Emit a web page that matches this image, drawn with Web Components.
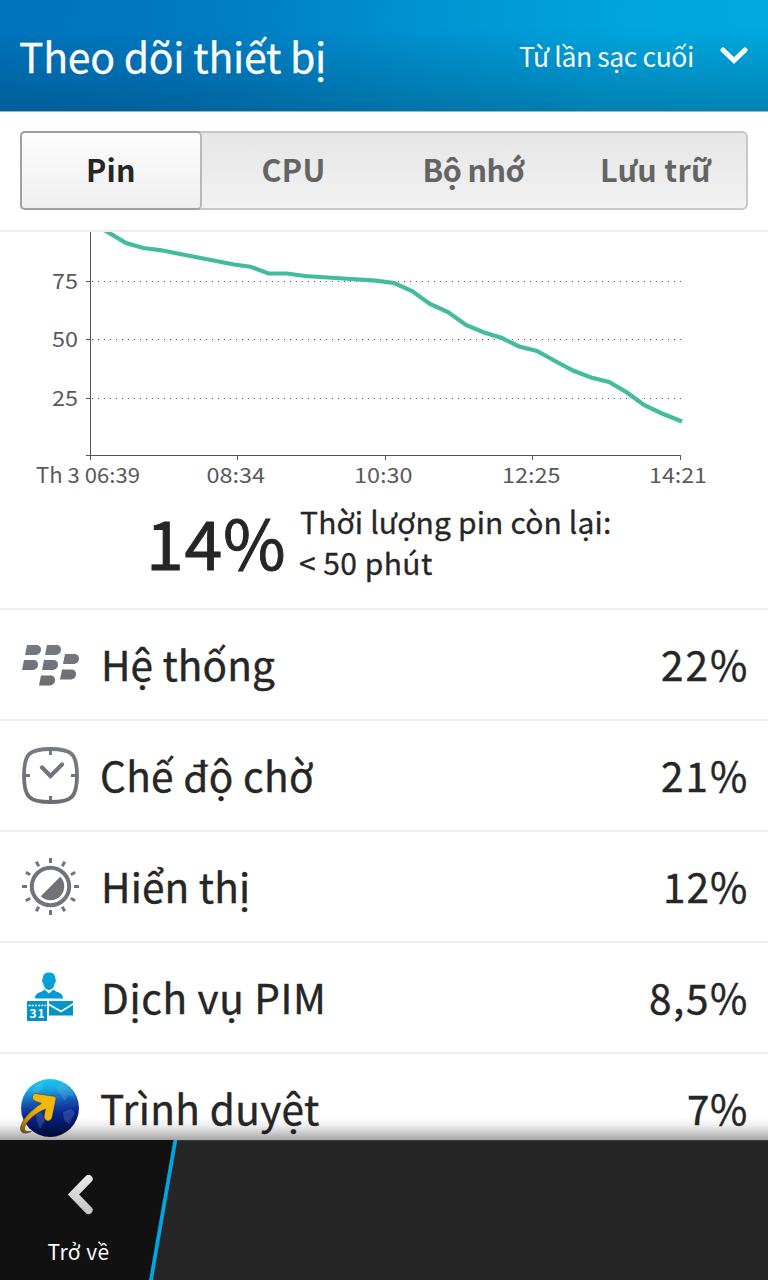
<!DOCTYPE html>
<html lang="vi">
<head>
<meta charset="utf-8">
<meta name="viewport" content="width=device-width, initial-scale=1">
<title>Theo dõi thiết bị</title>
<style>
  body {
    margin: 0;
    font-family: "Noto Sans CJK SC", "Noto Sans", sans-serif;
    color: #262626;
    background: #fff;
  }
</style>
</head>
<body>

<device-monitor></device-monitor>

<script>
// Text set to an exact ink width by adjusting the tracking
class FitText extends HTMLElement {

  constructor () {
    super()
    this.shadow = this.attachShadow({ mode: 'open' })
  }

  connectedCallback () {
    this.shadow.innerHTML =
    /*html*/`
    <style>
      :host {
        display: block;
        white-space: nowrap;
      }
    </style>
    <slot></slot>
    `
    this.fit()
  }

  fit () {
    const target = parseFloat(this.getAttribute('width'))
    const text = this.textContent
    const style = getComputedStyle(this)
    const context = document.createElement('canvas').getContext('2d')
    context.font = `${style.fontWeight} ${style.fontSize} ${style.fontFamily}`
    const ink = context.measureText(text)
    const width = ink.actualBoundingBoxLeft + ink.actualBoundingBoxRight

    this.style.width = `${target}px`
    this.style.textIndent = `${ink.actualBoundingBoxLeft}px`
    this.style.letterSpacing = `${(target - width) / (text.length - 1)}px`
  }
}

class TitleBar extends HTMLElement {

  constructor () {
    super()
    this.shadow = this.attachShadow({ mode: 'open' })
  }

  connectedCallback () {
    this.shadow.innerHTML =
    /*html*/`
    <style>
      :host {
        align-items: center;
        background:
          linear-gradient(to bottom, rgba(0, 40, 70, 0) 25%, rgba(0, 45, 75, 0.3) 100%),
          linear-gradient(100deg, #0073bd 0%, #007ac1 25%, #0093d3 55%, #00a5de 80%, #00a9e0 100%);
        border-bottom: 1px solid #a3b4bd;
        box-sizing: border-box;
        color: #fafafa;
        display: flex;
        height: 112px;
        justify-content: space-between;
        padding: 0 20px 2px 20px;
      }

      .title {
        -webkit-text-stroke: 0.3px;
        font-size: 41px;
        line-height: 60px;
      }

      .filter {
        align-items: center;
        display: flex;
        font-size: 26.5px;
        gap: 27px;
        line-height: 40px;
        padding-top: 3px;
      }

      svg {
        display: block;
      }
    </style>

    <fit-text class="title" width="304">Theo dõi thiết bị</fit-text>
    <div class="filter">
      <fit-text width="174">Từ lần sạc cuối</fit-text>
      <svg width="28" height="18" viewBox="0 0 28 18">
        <path d="M3 3 L14 13.5 L25 3" fill="none" stroke="#fafafa" stroke-width="5" stroke-linecap="round"/>
      </svg>
    </div>
    `
  }
}

class SegmentedControl extends HTMLElement {

  constructor () {
    super()
    this.shadow = this.attachShadow({ mode: 'open' })
    this.data = [
      { label: 'Pin', width: 46, selected: true },
      { label: 'CPU', width: 61 },
      { label: 'Bộ nhớ', width: 101 },
      { label: 'Lưu trữ', width: 110 }
    ]
  }

  connectedCallback () {
    this.shadow.innerHTML =
    /*html*/`
    <style>
      :host {
        border-bottom: 2px solid #ededed;
        display: block;
        padding: 19px 20px 20px;
      }

      .segments {
        background: linear-gradient(#e6e6e6, #f2f2f2);
        border-radius: 6px;
        box-shadow: inset 0 0 0 2px #c8c8c8;
        display: grid;
        grid-template-columns: 182px 182px 182px 182px;
        height: 79px;
      }

      .segment {
        align-items: center;
        box-sizing: border-box;
        color: #646464;
        display: flex;
        font-size: 30.5px;
        font-weight: 700;
        justify-content: center;
        line-height: 40px;
        padding-bottom: 4px;
      }

      .selected {
        background: linear-gradient(#fdfdfd, #efefef);
        border: 2px solid #a0a0a0;
        border-right-color: #b8b8b8;
        border-radius: 5px;
        color: #262626;
      }
    </style>

    <div class="segments">
      ${this.data.map(item => `
        <div class="segment ${item.selected ? 'selected' : ''}"><fit-text width="${item.width}">${item.label}</fit-text></div>
      `).join('')}
    </div>
    `
  }
}

class BatteryChart extends HTMLElement {

  constructor () {
    super()
    this.shadow = this.attachShadow({ mode: 'open' })
    this.points = '98,226 108,232.2 126,243 143.5,248 161.5,250.3 180,254 234,264.5 250.5,266.7 268.5,273.5 287,273.5 305,276 343,278.5 376,280.7 394,283 412,291 430,304 448,312 466,325 484,332.5 502,338 519,346.5 537,351 555,361 573,370.5 591,377.5 609,382 627,392.5 644,405 662,413.5 682,421.5'
    this.levels = [
      { label: '75', y: 281.5 },
      { label: '50', y: 339.5 },
      { label: '25', y: 398.5 }
    ]
    this.times = [
      { label: 'Th 3 06:39', tick: 90.5, x: 36, width: 104 },
      { label: '08:34', tick: 237.5, x: 206.5, width: 58.5 },
      { label: '10:30', tick: 385.5, x: 354, width: 58.5 },
      { label: '12:25', tick: 532.5, x: 502, width: 58.5 },
      { label: '14:21', tick: 680.5, x: 649, width: 58 }
    ]
  }

  connectedCallback () {
    this.shadow.innerHTML =
    /*html*/`
    <style>
      :host {
        display: block;
      }

      svg {
        display: block;
      }

      .axis {
        stroke: #555;
        stroke-width: 1;
      }

      .grid {
        stroke: #555;
        stroke-dasharray: 1 5;
      }

      .line {
        fill: none;
        stroke: #42bc9c;
        stroke-width: 4.2;
      }

      text {
        fill: #5a5a5a;
        font-size: 21px;
      }
    </style>

    <svg width="768" height="264" viewBox="0 232 768 264">
      <path class="axis" d="M90.5 232V460M86 455.5H681"/>
      ${this.levels.map(level => `
        <path class="grid" d="M92 ${level.y}H681"/>
        <path class="axis" d="M86 ${level.y}H90"/>
        <text x="52" y="${level.y + 7.5}" textLength="26" lengthAdjust="spacingAndGlyphs">${level.label}</text>
      `).join('')}
      ${this.times.map(time => `
        <path class="axis" d="M${time.tick} 455V460"/>
        <text x="${time.x}" y="483" textLength="${time.width}" lengthAdjust="spacingAndGlyphs">${time.label}</text>
      `).join('')}
      <polyline class="line" points="${this.points}"/>
    </svg>
    `
  }
}

class BatterySummary extends HTMLElement {

  constructor () {
    super()
    this.shadow = this.attachShadow({ mode: 'open' })
  }

  connectedCallback () {
    this.shadow.innerHTML =
    /*html*/`
    <style>
      :host {
        align-items: center;
        box-sizing: border-box;
        display: flex;
        gap: 17px;
        height: 112px;
        padding: 0 0 20px 151px;
      }

      .level {
        -webkit-text-stroke: 0.9px;
        font-size: 68px;
        line-height: 80px;
        padding-bottom: 3px;
      }

      .remaining {
        -webkit-text-stroke: 0.3px;
        font-size: 30px;
        line-height: 41px;
      }
    </style>

    <fit-text class="level" width="132">14%</fit-text>
    <div class="remaining">
      <fit-text width="310">Thời lượng pin còn lại:</fit-text>
      <fit-text width="132">&lt; 50 phút</fit-text>
    </div>
    `
  }
}

class UsageRow extends HTMLElement {

  constructor () {
    super()
    this.shadow = this.attachShadow({ mode: 'open' })
  }

  connectedCallback () {
    this.shadow.innerHTML =
    /*html*/`
    <style>
      :host {
        -webkit-text-stroke: 0.4px;
        align-items: center;
        border-top: 2px solid #ededed;
        box-sizing: border-box;
        display: flex;
        flex: none;
        font-size: 40.5px;
        height: 111px;
        line-height: 60px;
        padding: 0 22px 2px 20px;
      }

      ::slotted(svg) {
        display: block;
        margin-right: var(--label-gap, 22px);
      }

      .value {
        margin-left: auto;
      }
    </style>

    <slot></slot>
    <fit-text width="${this.getAttribute('label-width')}">${this.getAttribute('label')}</fit-text>
    <fit-text class="value" width="${this.getAttribute('value-width')}">${this.getAttribute('value')}</fit-text>
    `
  }
}

class UsageList extends HTMLElement {

  constructor () {
    super()
    this.shadow = this.attachShadow({ mode: 'open' })
  }

  rays () {
    let rays = ''
    for (let angle = 0; angle < 360; angle += 30) {
      rays += `<path d="M30 1.5V6.5" transform="rotate(${angle} 30 30)"/>`
    }
    return rays
  }

  connectedCallback () {
    this.shadow.innerHTML =
    /*html*/`
    <style>
      :host {
        display: flex;
        flex: 1;
        flex-direction: column;
        min-height: 0;
        overflow: hidden;
      }

      /* stems with a wide side bearing start a little further in */
      .stem {
        --label-gap: 25px;
      }

      .cross {
        --label-gap: 21px;
      }

      usage-row svg {
        -webkit-text-stroke: 0;
      }
    </style>

    <usage-row class="stem" label="Hệ thống" label-width="170" value="22%" value-width="84">
      <svg width="60" height="60" viewBox="0 0 60 60">
        <defs>
          <linearGradient id="berry" gradientUnits="userSpaceOnUse" x1="0" y1="8" x2="0" y2="52">
            <stop offset="0" stop-color="#727d84"/>
            <stop offset="1" stop-color="#706a73"/>
          </linearGradient>
        </defs>
        <g fill="url(#berry)">
          <path d="M7 11H16C19.5 11 21 13 21 15.5C21 18.5 18.8 21 15 21H5Z"/>
          <path d="M27 11H36C39.5 11 41 13 41 15.500C41 18.5 38.8 21 35 21H25Z"/>
          <path d="M4 26H13C16.5 26 18 28 18 30.5C18 33.5 15.8 36 12 36H2Z"/>
          <path d="M24 26H33C36.5 26 38 28 38 30.5C38 33.5 35.8 36 32 36H22Z"/>
          <path d="M45 20H54C57.5 20 59 22 59 24.5C59 27.5 56.8 30 53 30H43Z"/>
          <path d="M42 35.5H51C54.5 35.5 56 37.5 56 40C56 43 53.8 45.5 50 45.5H40Z"/>
          <path d="M21 41.500H30C33.5 41.5 35 43.5 35 46C35 49 32.8 51.5 29 51.5H19Z"/>
        </g>
      </svg>
    </usage-row>

    <usage-row label="Chế độ chờ" label-width="211" value="21%" value-width="84">
      <svg width="60" height="60" viewBox="0 0 60 60">
        <defs>
          <linearGradient id="clock" gradientUnits="userSpaceOnUse" x1="0" y1="2" x2="0" y2="59">
            <stop offset="0" stop-color="#727d84"/>
            <stop offset="1" stop-color="#706a73"/>
          </linearGradient>
        </defs>
        <g fill="none" stroke="url(#clock)" stroke-width="3.8">
          <path d="M30.500 4C52 4 57 9 57 30.500C57 52 52 57 30.500 57C9 57 4 52 4 30.500C4 9 9 4 30.500 4Z"/>
          <path d="M29 5h3v5h-3zM29 51h3v5h-3zM5 29h5v3H5zM51 29h5v3h-5z" fill="url(#clock)" stroke="none"/>
          <path d="M22 22.500L30.500 31L42 19.500" stroke-width="4.2" stroke-linecap="round"/>
        </g>
      </svg>
    </usage-row>

    <usage-row class="stem" label="Hiển thị" label-width="143" value="12%" value-width="80">
      <svg width="60" height="60" viewBox="0 0 60 60">
        <g transform="translate(0.5 0.5)" fill="none" stroke="#72747d">
          <g stroke-width="3">${this.rays()}</g>
          <circle cx="30" cy="30" r="18.7" stroke-width="4"/>
          <path d="M39.7 20.3A13.7 13.7 0 0 1 20.3 39.7Z" fill="#72717a" stroke="none"/>
        </g>
      </svg>
    </usage-row>

    <usage-row class="stem" label="Dịch vụ PIM" label-width="217" value="8,5%" value-width="96">
      <svg width="60" height="60" viewBox="0 0 60 60">
        <defs>
          <linearGradient id="pim" gradientUnits="userSpaceOnUse" x1="0" y1="6" x2="0" y2="54">
            <stop offset="0" stop-color="#00a4de"/>
            <stop offset="1" stop-color="#0590c0"/>
          </linearGradient>
        </defs>
        <g fill="url(#pim)">
          <path d="M29 5.500C33.500 5.500 35.300 8 35.300 12C36.300 12 36 15.500 34.800 16C34.200 20 32 23 29 23C26 23 23.800 20 23.200 16C22 15.500 21.700 12 22.700 12C22.700 8 24.500 5.500 29 5.500Z"/>
          <path d="M24.500 22.500L29 26.500L33.500 22.500C36 26 43 24.500 43 31.500H15C15 24.500 22 26 24.500 22.500Z"/>
          <path d="M29 34H53V36L41 43.500L29 36.500Z"/>
          <path d="M29 38.500L41 45.500L53 38V48.500H29Z"/>
          <path d="M7 34H27V54H7Z"/>
        </g>
        <path d="M8.500 38.500H26" stroke="#fff" stroke-width="1.5" stroke-dasharray="2 1.200"/>
        <text x="9.500" y="51" textLength="15" font-size="12" font-weight="700" fill="#fff">31</text>
      </svg>
    </usage-row>

    <usage-row class="cross" label="Trình duyệt" label-width="218" value="7%" value-width="58">
      <svg width="60" height="60" viewBox="0 0 60 60">
        <defs>
          <linearGradient id="sea" x1="0" y1="0" x2="0.1" y2="1">
            <stop offset="0" stop-color="#16d5f2"/>
            <stop offset="0.22" stop-color="#16a8e2"/>
            <stop offset="0.45" stop-color="#1654b4"/>
            <stop offset="0.65" stop-color="#08238d"/>
            <stop offset="1" stop-color="#02114b"/>
          </linearGradient>
          <linearGradient id="gold" x1="1" y1="0" x2="0" y2="1">
            <stop offset="0.4" stop-color="#efb80e"/>
            <stop offset="0.75" stop-color="#c99508"/>
            <stop offset="1" stop-color="#806008"/>
          </linearGradient>
        </defs>
        <circle cx="30" cy="30" r="29" fill="url(#sea)"/>
        <path d="M12 12L17 6L25 4L22 8L24 10L18 14L15 19ZM35 9L41 5L51 11L55 19L48 17L45 23L39 15ZM15 33L22 35L25 42L20 51L17 44ZM43 34L51 31L55 35L49 46L44 42Z" fill="#9cc7e8" opacity="0.2"/>
        <path d="M15.500 15.500C11.500 16 11.500 21.500 15 23L21.500 25.500C11 32 1 42 0.500 50.500C0.500 56 5.500 56 11.500 53.500C6.500 54 4 53 4.500 50C6 43 17 34 25.500 31L24.200 37.500C23.500 43.500 30.500 45 32 39.500L36 21Q36.300 18.500 34 18.300Z" fill="url(#gold)" stroke="#3c3412" stroke-width="0.5"/>
      </svg>
    </usage-row>
    `
  }
}

class ActionBar extends HTMLElement {

  constructor () {
    super()
    this.shadow = this.attachShadow({ mode: 'open' })
  }

  connectedCallback () {
    this.shadow.innerHTML =
    /*html*/`
    <style>
      :host {
        background:
          linear-gradient(#3b3b3b, #3b3b3b) 0 0 / 100% 1px no-repeat,
          #262626;
        display: flex;
        flex: none;
        height: 140px;
        position: relative;
      }

      /* soft shadow cast over the list */
      :host::before {
        background: linear-gradient(transparent, rgba(0, 0, 0, 0.07) 35%, rgba(0, 0, 0, 0.35));
        bottom: 100%;
        content: "";
        height: 22px;
        left: 0;
        position: absolute;
        right: 0;
      }

      .back {
        align-items: center;
        box-sizing: border-box;
        color: #fafafa;
        display: flex;
        flex-direction: column;
        font-size: 21px;
        gap: 21px;
        line-height: 30px;
        padding-top: 35px;
        position: relative;
        width: 156px;
      }

      .edge {
        left: 0;
        position: absolute;
        top: 0;
      }

      svg {
        display: block;
      }
    </style>

    <svg class="edge" width="180" height="140" viewBox="0 0 180 140">
      <path d="M0 0H175.300L151 140H0Z" fill="#111"/>
      <path d="M175.700 -2L150.600 142" stroke="#00a6df" stroke-width="3.8"/>
    </svg>
    <div class="back">
      <svg width="30" height="40" viewBox="0 0 30 40">
        <defs>
          <linearGradient id="arrow" x1="0" y1="0" x2="0" y2="1">
            <stop offset="0" stop-color="#e6e6e6"/>
            <stop offset="1" stop-color="#c8c8c8"/>
          </linearGradient>
        </defs>
        <path d="M25.500 4L10.500 19.500L25.500 35" fill="none" stroke="url(#arrow)" stroke-width="8.200" stroke-linecap="round"/>
      </svg>
      <fit-text width="61">Trở về</fit-text>
    </div>
    `
  }
}

class DeviceMonitor extends HTMLElement {

  constructor () {
    super()
    this.shadow = this.attachShadow({ mode: 'open' })
  }

  connectedCallback () {
    this.shadow.innerHTML =
    /*html*/`
    <style>
      :host {
        display: flex;
        flex-direction: column;
        height: 1280px;
        overflow: hidden;
        width: 768px;
      }
    </style>

    <title-bar></title-bar>
    <segmented-control></segmented-control>
    <battery-chart></battery-chart>
    <battery-summary></battery-summary>
    <usage-list></usage-list>
    <action-bar></action-bar>
    `
  }
}

customElements.define('fit-text', FitText);
customElements.define('title-bar', TitleBar);
customElements.define('segmented-control', SegmentedControl);
customElements.define('battery-chart', BatteryChart);
customElements.define('battery-summary', BatterySummary);
customElements.define('usage-row', UsageRow);
customElements.define('usage-list', UsageList);
customElements.define('action-bar', ActionBar);
customElements.define('device-monitor', DeviceMonitor);
</script>
</body>
</html>
